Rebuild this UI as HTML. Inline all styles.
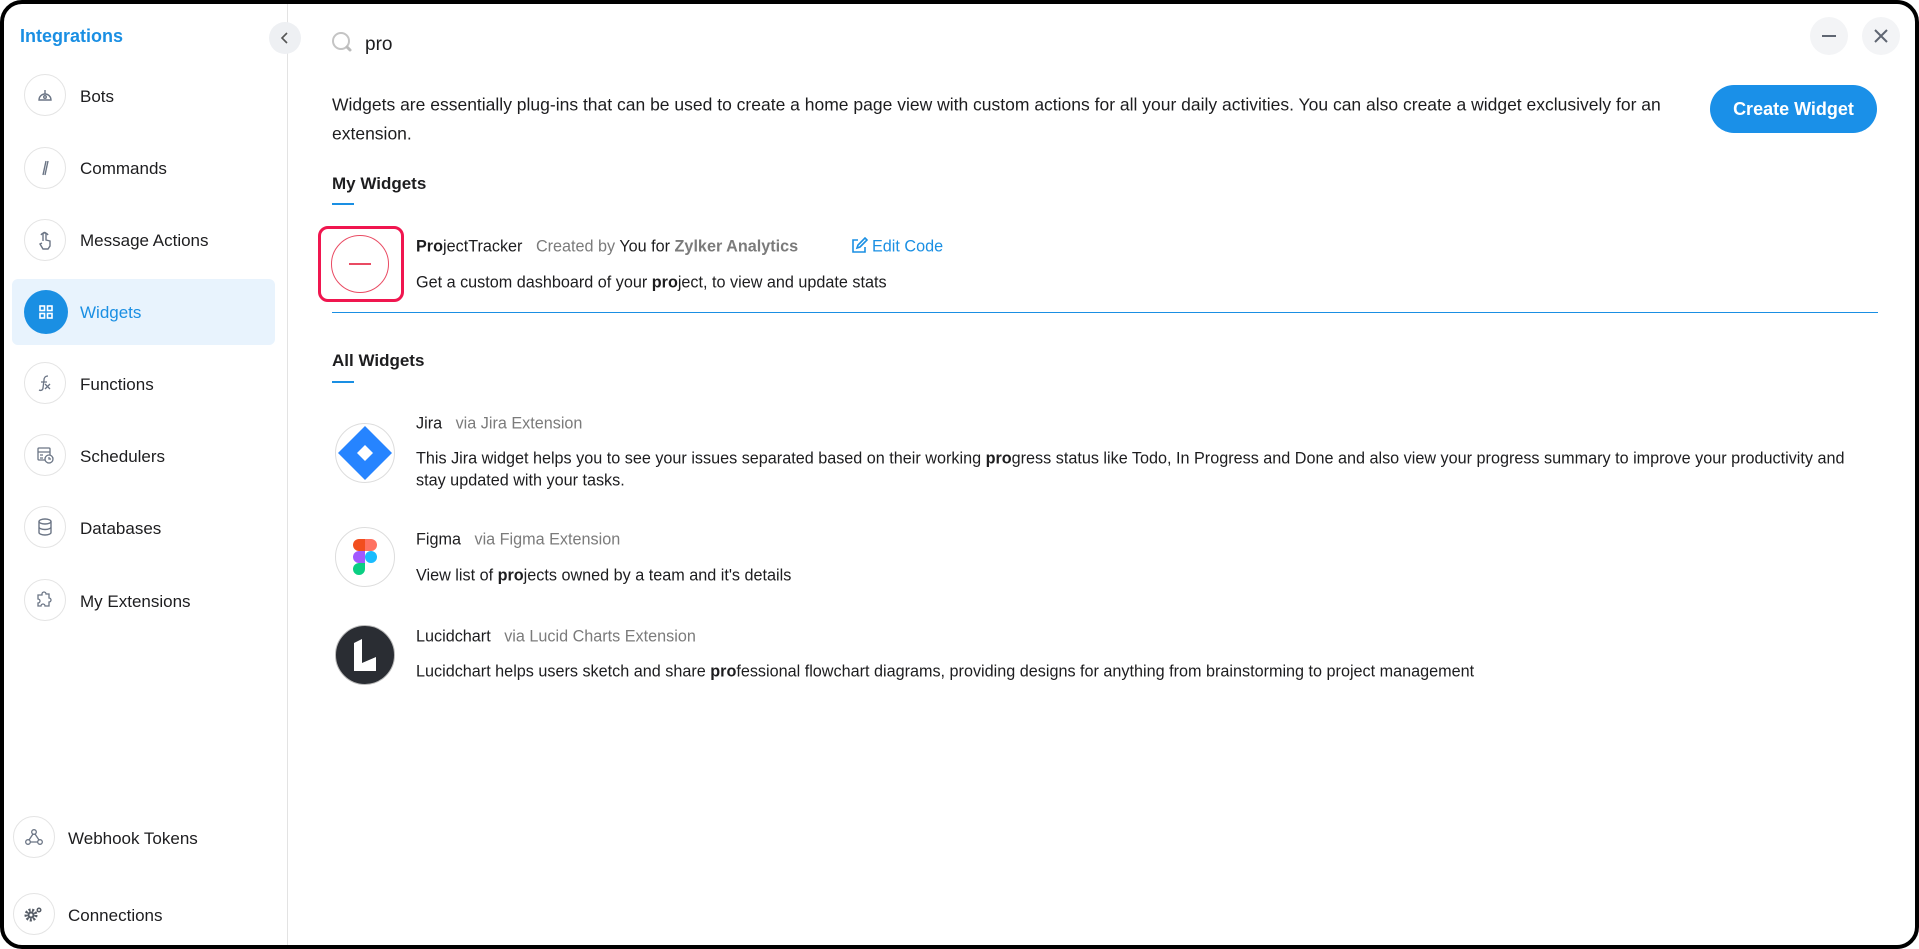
<!DOCTYPE html>
<html><head><meta charset="utf-8"><style>
*{margin:0;padding:0;box-sizing:border-box}
html,body{width:1919px;height:949px;background:#fff;overflow:hidden;font-family:"Liberation Sans",sans-serif;color:#1d1d1f}
.frame{position:absolute;left:0;top:0;width:1919px;height:949px;border:4px solid #000;border-radius:22px;overflow:hidden;background:#fff}
.abs{position:absolute;white-space:nowrap}
.side{position:absolute;left:0;top:0;width:284px;height:100%;border-right:1px solid #e3e3e3}
.ic{position:absolute;width:42px;height:42px;border-radius:50%;border:1px solid #e4e4e4;background:#fff;display:flex;align-items:center;justify-content:center}
.lbl{position:absolute;font-size:17px;color:#1d1d1f;transform:translateY(-50%)}
.t{font-size:16.2px;color:#1d1d1f;position:absolute;white-space:nowrap;transform:translateY(-50%)}
.g{color:#7b7b7b}
b{font-weight:bold}
.logo{position:absolute;width:60px;height:60px;border-radius:50%;border:1px solid #ddd;background:#fff;display:flex;align-items:center;justify-content:center;overflow:hidden}
</style></head><body>
<div class="frame">
<div class="side">
 <div class="abs" style="left:16px;top:22px;font-size:18px;font-weight:bold;color:#1a8fe3">Integrations</div>
 <div class="abs" style="left:265px;top:18px;width:32px;height:32px;border-radius:50%;background:#eef0f3;display:flex;align-items:center;justify-content:center"><svg width="12" height="14" viewBox="0 0 12 14"><path d="M8 2 L3 7 L8 12" fill="none" stroke="#555" stroke-width="1.6"/></svg></div>
 <div style="position:absolute;left:8px;top:275px;width:263px;height:66px;border-radius:6px;background:#e8f3fd"></div>

 <div class="ic" style="left:20px;top:70px"><svg width="18" height="18" viewBox="0 0 18 18" fill="none" stroke="#6b7585" stroke-width="1.4"><path d="M3 14 A6 6 0 0 1 15 14 Z"/><circle cx="9" cy="11" r="1.3"/><path d="M9 4v4"/></svg></div>
 <div class="lbl" style="left:76px;top:93px">Bots</div>
 <div class="ic" style="left:20px;top:143px"><svg width="18" height="18" viewBox="0 0 18 18" fill="none" stroke="#6b7585" stroke-width="1.4"><path d="M10 2 L7 16 M12 2 L9 16"/></svg></div>
 <div class="lbl" style="left:76px;top:165px">Commands</div>
 <div class="ic" style="left:20px;top:215px"><svg width="18" height="20" viewBox="0 0 18 20" fill="none" stroke="#6b7585" stroke-width="1.4"><path d="M7 11V4a1.5 1.5 0 0 1 3 0v6l4 1v5l-2 3H7l-3-5 2-1"/><path d="M5 5a4 4 0 0 1 7 0"/></svg></div>
 <div class="lbl" style="left:76px;top:237px">Message Actions</div>
 <div style="position:absolute;left:20px;top:286px;width:44px;height:44px;border-radius:50%;background:#1a8fe3;display:flex;align-items:center;justify-content:center"><svg width="16" height="16" viewBox="0 0 16 16" fill="none" stroke="#fff" stroke-width="1.6"><rect x="2" y="2" width="4.5" height="4.5"/><rect x="9.5" y="2" width="4.5" height="4.5"/><rect x="2" y="9.5" width="4.5" height="4.5"/><rect x="9.5" y="9.5" width="4.5" height="4.5"/></svg></div>
 <div class="lbl" style="left:76px;top:309px;color:#1a8fe3">Widgets</div>
 <div class="ic" style="left:20px;top:358px"><svg width="20" height="20" viewBox="0 0 20 20" fill="none" stroke="#6b7585" stroke-width="1.3"><path d="M13 3c-3 0-4 2-4 4l-1 8c0 2-2 3-4 2M6 9h6M10 11l5 5M15 11l-5 5"/></svg></div>
 <div class="lbl" style="left:76px;top:381px">Functions</div>
 <div class="ic" style="left:20px;top:430px"><svg width="20" height="20" viewBox="0 0 20 20" fill="none" stroke="#6b7585" stroke-width="1.3"><rect x="3" y="3" width="12" height="12" rx="1"/><path d="M3 7h12M5 10h3M5 13h3"/><circle cx="14" cy="14" r="4" fill="#fff"/><path d="M14 12v2h2"/></svg></div>
 <div class="lbl" style="left:76px;top:453px">Schedulers</div>
 <div class="ic" style="left:20px;top:502px"><svg width="18" height="20" viewBox="0 0 18 20" fill="none" stroke="#6b7585" stroke-width="1.4"><ellipse cx="9" cy="4.5" rx="6" ry="2.5"/><path d="M3 4.5v11c0 1.4 2.7 2.5 6 2.5s6-1.1 6-2.5v-11M3 10c0 1.4 2.7 2.5 6 2.5s6-1.1 6-2.5"/></svg></div>
 <div class="lbl" style="left:76px;top:525px">Databases</div>
 <div class="ic" style="left:20px;top:575px"><svg width="20" height="20" viewBox="0 0 20 20" fill="none" stroke="#6b7585" stroke-width="1.3"><path d="M7 4a2 2 0 0 1 4 0h3v4a2 2 0 0 1 0 4v4h-4a2 2 0 0 0-4 0H3v-3a2 2 0 0 0 0-4V5h4z"/></svg></div>
 <div class="lbl" style="left:76px;top:598px">My Extensions</div>

 <div class="ic" style="left:9px;top:812px"><svg width="20" height="20" viewBox="0 0 20 20" fill="none" stroke="#6b7585" stroke-width="1.3"><circle cx="10" cy="5" r="2.3"/><circle cx="4" cy="15" r="2.3"/><circle cx="16" cy="15" r="2.3"/><path d="M9 7l-4 6M6.5 15h7M11 7l4 6"/></svg></div>
 <div class="lbl" style="left:64px;top:835px">Webhook Tokens</div>
 <div class="ic" style="left:9px;top:889px"><svg width="22" height="18" viewBox="0 0 22 18"><circle cx="8" cy="10" r="5" fill="none" stroke="#555c66" stroke-width="3" stroke-dasharray="2 1.5"/><circle cx="8" cy="10" r="3.5" fill="#555c66"/><circle cx="8" cy="10" r="1.5" fill="#fff"/><circle cx="16" cy="5" r="2.5" fill="#555c66"/><circle cx="16" cy="5" r="1" fill="#fff"/></svg></div>
 <div class="lbl" style="left:64px;top:912px">Connections</div>
</div>

<svg class="abs" style="left:327px;top:27px" width="24" height="24" viewBox="0 0 24 24" fill="none"><circle cx="10" cy="10" r="8" stroke="#c4c4c4" stroke-width="2"/><path d="M16 16l3 3" stroke="#bbb" stroke-width="3" stroke-linecap="round"/></svg>
<div class="abs" style="left:361px;top:30px;font-size:19px">pro</div>

<div class="abs" style="left:1806px;top:13px;width:38px;height:38px;border-radius:50%;background:#f3f4f6;display:flex;align-items:center;justify-content:center"><div style="width:14px;height:2.5px;background:#5f6672"></div></div>
<div class="abs" style="left:1858px;top:13px;width:38px;height:38px;border-radius:50%;background:#f3f4f6;display:flex;align-items:center;justify-content:center"><svg width="16" height="16" viewBox="0 0 16 16"><path d="M2 2l12 12M14 2L2 14" stroke="#5f6672" stroke-width="2"/></svg></div>

<div class="t" style="left:328px;top:101px;font-size:17.5px">Widgets are essentially plug-ins that can be used to create a home page view with custom actions for all your daily activities. You can also create a widget exclusively for an</div>
<div class="t" style="left:328px;top:130px;font-size:17.5px">extension.</div>
<div class="abs" style="left:1706px;top:81px;width:167px;height:48px;border-radius:24px;background:#1a90e8;color:#fff;font-weight:bold;font-size:18px;display:flex;align-items:center;justify-content:center">Create Widget</div>

<div class="t" style="left:328px;top:180px;font-weight:bold;font-size:17px">My Widgets</div>
<div class="abs" style="left:328px;top:199px;width:22px;height:2px;background:#1a8fe3"></div>

<div class="abs" style="left:314px;top:222px;width:86px;height:76px;border:3px solid #f0164f;border-radius:10px"></div>
<div class="abs" style="left:327px;top:231px;width:58px;height:58px;border:1.5px solid #e94b63;border-radius:50%"></div>
<div class="abs" style="left:345px;top:259px;width:22px;height:2px;background:#e94b63"></div>

<div class="t" style="left:412px;top:243px"><b>Pro</b>jectTracker &nbsp;&nbsp;<span class="g">Created by</span> You for <b class="g">Zylker Analytics</b></div>
<svg class="abs" style="left:846px;top:233px" width="18" height="18" viewBox="0 0 18 18" fill="none" stroke="#1a8fe3" stroke-width="1.6"><path d="M8 3H3v12h12v-5"/><path d="M7 11l1-3 7-7 2 2-7 7z"/></svg>
<div class="t" style="left:868px;top:243px;color:#1a8fe3">Edit Code</div>
<div class="t" style="left:412px;top:279px">Get a custom dashboard of your <b>pro</b>ject, to view and update stats</div>
<div class="abs" style="left:328px;top:308px;width:1546px;height:1px;background:#1a8fe3"></div>

<div class="t" style="left:328px;top:357px;font-weight:bold;font-size:17px">All Widgets</div>
<div class="abs" style="left:328px;top:377px;width:22px;height:2px;background:#1a8fe3"></div>

<div class="logo" style="left:331px;top:419px"><svg width="58" height="58" viewBox="0 0 58 58"><path d="M29 2 L56 29 L29 56 L2 29 Z" fill="#2684ff"/><path d="M29 21 L37 29 L29 37 L21 29Z" fill="#fff"/></svg></div>
<div class="t" style="left:412px;top:420px">Jira &nbsp;&nbsp;<span class="g">via Jira Extension</span></div>
<div class="t" style="left:412px;top:455px">This Jira widget helps you to see your issues separated based on their working <b>pro</b>gress status like Todo, In Progress and Done and also view your progress summary to improve your productivity and</div>
<div class="t" style="left:412px;top:477px">stay updated with your tasks.</div>

<div class="logo" style="left:331px;top:523px"><svg width="26" height="38" viewBox="0 0 26 38"><path d="M7 1h6v12H7a6 6 0 0 1 0-12z" fill="#f24e1e"/><path d="M13 1h6a6 6 0 0 1 0 12h-6z" fill="#ff7262"/><path d="M7 13h6v12H7a6 6 0 0 1 0-12z" fill="#a259ff"/><circle cx="19" cy="19" r="6" fill="#1abcfe"/><path d="M7 25h6v6a6 6 0 1 1-6-6z" fill="#0acf83"/></svg></div>
<div class="t" style="left:412px;top:536px">Figma &nbsp;&nbsp;<span class="g">via Figma Extension</span></div>
<div class="t" style="left:412px;top:572px">View list of <b>pro</b>jects owned by a team and it's details</div>

<div class="logo" style="left:331px;top:621px;background:#2a2d33;border-color:#bbb"><svg width="30" height="36" viewBox="0 0 30 36"><path d="M4 6 L12 2 V26 L26 20 V34 H4 Z" fill="#fff"/></svg></div>
<div class="t" style="left:412px;top:633px">Lucidchart &nbsp;&nbsp;<span class="g">via Lucid Charts Extension</span></div>
<div class="t" style="left:412px;top:668px">Lucidchart helps users sketch and share <b>pro</b>fessional flowchart diagrams, providing designs for anything from brainstorming to project management</div>
</div>
</body></html>
